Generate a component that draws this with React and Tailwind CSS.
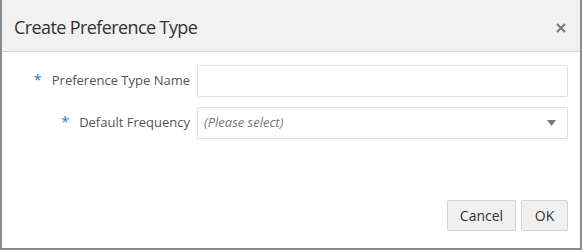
export default function App() {
  return (
    <div
      className="w-[582px] h-[250px] bg-white flex flex-col border-l-2 border-r-2 border-b-2 border-[#8c8c8c]"
      style={{ fontFamily: '"Open Sans", "Liberation Sans", sans-serif' }}
    >
      <div className="h-[52px] shrink-0 bg-[#f1f1f1] border-b border-[#d4d4d4] flex items-center justify-between pl-[12px] pr-[10px] pt-[4px]">
        <div className="text-[18px] tracking-[-0.6px] text-[#333]">Create Preference Type</div>
        <button className="w-[18px] h-[18px] flex items-center justify-center text-[#777]">
          <svg width="10" height="10" viewBox="0 0 10 10">
            <path d="M1 1 L9 9 M9 1 L1 9" stroke="currentColor" strokeWidth="2" />
          </svg>
        </button>
      </div>

      <div className="flex-1 flex flex-col gap-[10px] pt-[13px] pr-[12px]">
        <div className="flex items-center">
          <div className="w-[195px] pr-[7px] flex justify-end items-center text-[13px] text-[#555]">
            <span className="text-[#2f7ec2] text-[15px] mr-[10px] -mt-[4px]">*</span>
            Preference Type Name
          </div>
          <input className="w-[371px] h-[32px] border border-[#dfdfdf] rounded-[2px] bg-white outline-none" />
        </div>
        <div className="flex items-center">
          <div className="w-[195px] pr-[7px] flex justify-end items-center text-[13px] text-[#555]">
            <span className="text-[#2f7ec2] text-[15px] mr-[10px] -mt-[4px]">*</span>
            Default Frequency
          </div>
          <div className="w-[371px] h-[32px] border border-[#dfdfdf] rounded-[2px] bg-white flex items-center justify-between pl-[6px] pr-[11px]">
            <span className="text-[13px] italic text-[#777]">(Please select)</span>
            <svg width="9" height="6" viewBox="0 0 9 6">
              <path d="M0 0 L9 0 L4.5 6 Z" fill="#777" />
            </svg>
          </div>
        </div>
      </div>

      <div className="flex justify-end gap-[5px] pr-[12px] pb-[17px]">
        <button className="w-[69px] h-[31px] bg-[#f0f0f0] border border-[#d3d3d3] rounded-[2px] text-[14px] text-[#333]">
          Cancel
        </button>
        <button className="w-[47px] h-[31px] bg-[#f0f0f0] border border-[#d3d3d3] rounded-[2px] text-[14px] text-[#333]">
          OK
        </button>
      </div>
    </div>
  );
}
